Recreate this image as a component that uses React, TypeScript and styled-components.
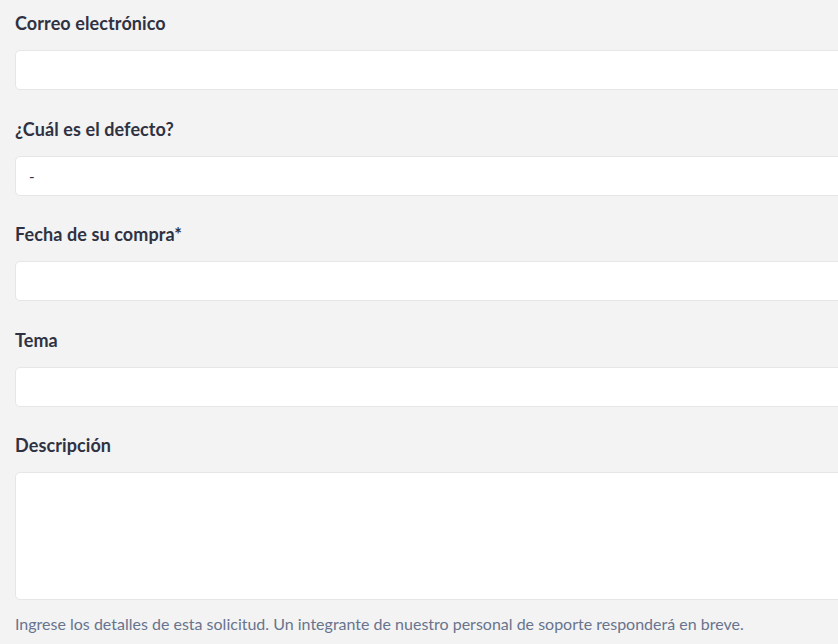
import React from 'react';
import styled, { createGlobalStyle } from 'styled-components';

const GlobalStyle = createGlobalStyle`
  html, body {
    margin: 0;
    padding: 0;
    background: #f3f3f3;
    overflow: hidden;
  }
  * {
    box-sizing: border-box;
  }
`;

const Form = styled.form`
  width: 900px;
  padding: 9px 0 0 15px;
  font-family: Lato, "Open Sans", sans-serif;
`;

const Field = styled.div`
  display: flex;
  flex-direction: column;
  margin-bottom: 24.5px;

  &:last-of-type {
    margin-bottom: 0;
  }
`;

const Label = styled.label`
  font-size: 18px;
  line-height: 29px;
  font-weight: 700;
  letter-spacing: 0.1px;
  color: #2f3242;
  margin-bottom: 12px;
`;

const Input = styled.input`
  height: 40px;
  width: 100%;
  padding: 0 13px;
  background: #ffffff;
  border: 1px solid #e6e6e8;
  border-radius: 5px;
  font-family: inherit;
  font-size: 15px;
  color: #2f3242;
  outline: none;
`;

const TextArea = styled.textarea`
  height: 128px;
  width: 100%;
  padding: 10px 14px;
  background: #ffffff;
  border: 1px solid #e6e6e8;
  border-radius: 5px;
  font-family: inherit;
  font-size: 15px;
  resize: none;
  outline: none;
`;

const Hint = styled.p`
  margin: 12px 0 0;
  font-size: 16px;
  line-height: 24px;
  color: #68738d;
`;

const fields = [
  { label: 'Correo electrónico', value: '' },
  { label: '¿Cuál es el defecto?', value: '-' },
  { label: 'Fecha de su compra*', value: '' },
  { label: 'Tema', value: '' },
];

const App: React.FC = () => {
  return (
    <>
      <GlobalStyle />
      <Form onSubmit={(e) => e.preventDefault()}>
        {fields.map((f) => (
          <Field key={f.label}>
            <Label>{f.label}</Label>
            <Input defaultValue={f.value} />
          </Field>
        ))}
        <Field>
          <Label>Descripción</Label>
          <TextArea />
        </Field>
        <Hint>
          Ingrese los detalles de esta solicitud. Un integrante de nuestro personal de soporte responderá en breve.
        </Hint>
      </Form>
    </>
  );
};

export default App;
